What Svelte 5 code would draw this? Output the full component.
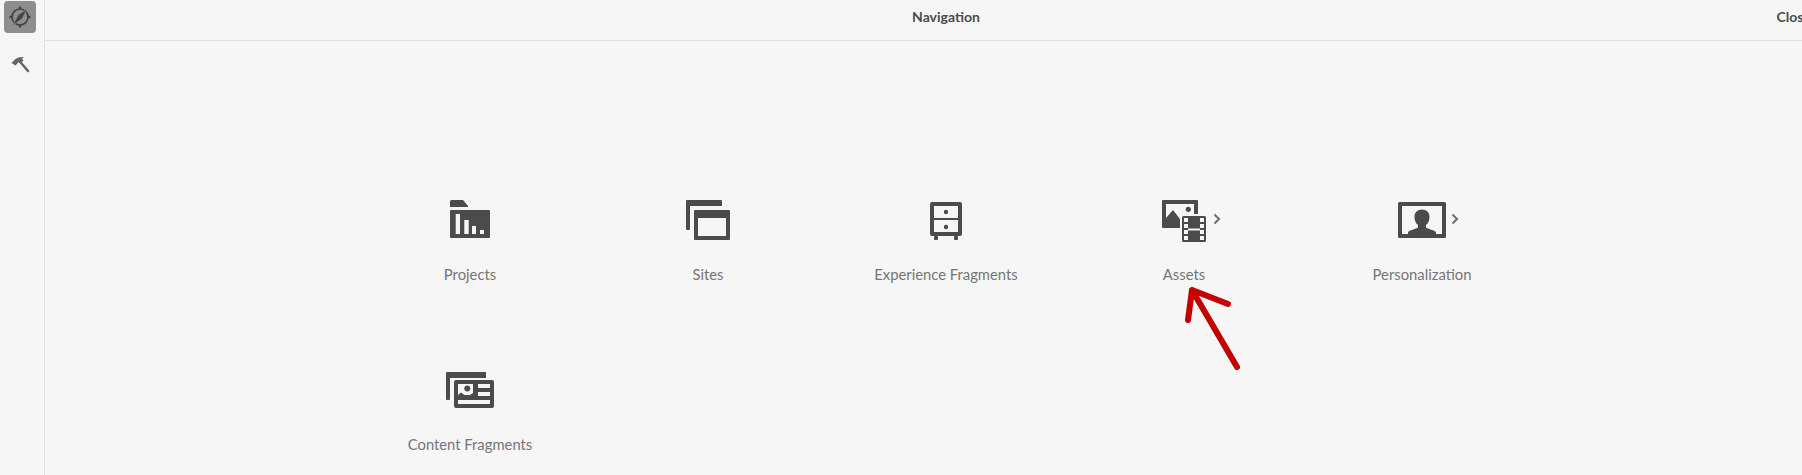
<script>
	// rounded rect as path data, holes are cut by fill-rule evenodd
	function box(x, y, w, h, r = 1) {
		return `M${x + r} ${y}H${x + w - r}Q${x + w} ${y} ${x + w} ${y + r}V${y + h - r}Q${x + w} ${y + h} ${x + w - r} ${y + h}H${x + r}Q${x} ${y + h} ${x} ${y + h - r}V${y + r}Q${x} ${y} ${x + r} ${y}Z`;
	}
	function dot(cx, cy, r) {
		return `M${cx - r} ${cy}A${r} ${r} 0 1 0 ${cx + r} ${cy}A${r} ${r} 0 1 0 ${cx - r} ${cy}Z`;
	}

	const items = [
		{
			label: 'Projects',
			d: [
				'M4 7V1.5Q4 0 5.5 0H17L22 6V7Z',
				box(4, 10, 40, 28),
				box(9.7, 14, 4.3, 20, 0),
				box(18.3, 20, 4.4, 14, 0),
				box(26, 26, 4, 8, 0),
				box(34, 30, 4, 4, 0)
			]
		},
		{
			label: 'Sites',
			d: [
				'M3 0H37Q38 0 38 1V6H6V29Q6 30 5 30H3Q2 30 2 29V1Q2 0 3 0Z',
				box(10, 10, 36, 30),
				box(14, 18, 28, 18, 0)
			]
		},
		{
			label: 'Experience Fragments',
			d: [
				box(8, 2, 32, 34, 2),
				box(12, 6, 24, 12, 0),
				box(12, 20, 24, 12, 0),
				dot(24, 12, 2.2),
				dot(24, 27, 2.2),
				box(12, 36, 4, 4, 1),
				box(32, 36, 4, 4, 1)
			]
		},
		{
			label: 'Assets',
			more: true,
			d: [
				'M3 0H37Q38 0 38 1V14H20V28H3Q2 28 2 27V1Q2 0 3 0Z',
				'M6 4H34V14H20V19L13 10L6 18Z',
				dot(28.3, 9.3, 2.6),
				box(22, 16, 24, 26, 1.5),
				box(24, 18, 4, 4, 0),
				box(24, 24, 4, 4, 0),
				box(24, 30, 4, 4, 0),
				box(24, 36, 4, 4, 0),
				box(40, 18, 4, 4, 0),
				box(40, 24, 4, 4, 0),
				box(40, 30, 4, 4, 0),
				box(40, 36, 4, 4, 0),
				box(28, 28.5, 12, 2, 0)
			]
		},
		{
			label: 'Personalization',
			more: true,
			d: [
				box(0, 2, 48, 36, 1.5),
				box(4, 6, 40, 28, 0),
				'M10 34V32.5C10 30.5 17 29.5 20 27.5V25C17.5 23 16.5 20.5 16.5 16.5C16.5 12.5 19.5 9.5 24 9.5C28.5 9.5 31.5 12.5 31.5 16.5C31.5 20.5 30.5 23 28 25V27.5C31 29.5 38 30.5 38 32.5V34Z'
			]
		},
		{
			label: 'Content Fragments',
			d: [
				'M1 2H40V8H4V29Q4 30 3 30H1Q0 30 0 29V3Q0 2 1 2Z',
				box(8, 10, 40, 28, 2),
				'M12 14H27V30H12Z',
				dot(21.3, 18.4, 3),
				'M12 30V25L15 22.5L18.5 25H24L27 23V30Z',
				box(32, 14, 12, 4, 0),
				box(32, 22, 12, 4, 0),
				box(12, 30, 32, 4, 0)
			]
		}
	];
</script>

<div class="shell">
	<nav class="rail">
		<button class="rail-btn active" aria-label="Navigation">
			<svg width="24" height="24" viewBox="0 0 24 24">
				<circle cx="12" cy="12" r="8" fill="none" stroke="#444" stroke-width="1.7" />
				<path d="M12 1.500V4.500M12 19.500V22.500M1.500 12H4.500M19.500 12H22.500" stroke="#444" stroke-width="2.400" />
				<path d="M19.500 3.500L14 14L4.500 20.500L10 10Z" fill="#444" stroke="#8e8e8e" stroke-width="0.800" />
			</svg>
		</button>
		<button class="rail-btn" aria-label="Tools">
			<svg width="24" height="24" viewBox="0 0 24 24">
				<path d="M3.500 11L7.500 7Q10.500 4.500 16 5L14 6.500L15.500 8.500L12.500 11.500L10.800 10L7.500 13.500Z" fill="#666" />
				<path d="M11 8.500L20 19" stroke="#666" stroke-width="2.600" stroke-linecap="round" />
			</svg>
		</button>
	</nav>

	<main class="main">
		<header class="top">
			<h1>Navigation</h1>
			<span class="close">Close</span>
		</header>

		<div class="grid">
			{#each items as item}
				<a class="cell" href="#{item.label}">
					<span class="icon">
						<svg width="48" height="44" viewBox="0 0 48 44">
							<path d={item.d.join('')} fill-rule="evenodd" />
						</svg>
						{#if item.more}
							<svg class="more" width="8" height="12" viewBox="0 0 8 12">
								<path d="M1.500 1.500L6 6L1.500 10.500" fill="none" stroke="#6e6e6e" stroke-width="2" />
							</svg>
						{/if}
					</span>
					<span class="label">{item.label}</span>
				</a>
			{/each}
		</div>
	</main>

	<svg class="arrow" width="70" height="100" viewBox="0 0 70 100">
		<path
			d="M12 5L57 82M8 35L12 5L48 19"
			fill="none"
			stroke="#c40000"
			stroke-width="6"
			stroke-linecap="round"
			stroke-linejoin="round"
		/>
	</svg>
</div>

<style>
	:global(html),
	:global(body) {
		margin: 0;
		overflow: hidden;
		background: #f6f6f6;
	}

	.shell {
		display: flex;
		height: 475px;
		position: relative;
		overflow: hidden;
		font-family: Lato, 'Liberation Sans', sans-serif;
	}

	.rail {
		flex: 0 0 45px;
		display: flex;
		flex-direction: column;
		align-items: flex-start;
		gap: 15px;
		padding: 1px 0 0 4px;
		box-sizing: border-box;
		border-right: 1px solid #e1e1e1;
	}

	.rail-btn {
		width: 32px;
		height: 32px;
		padding: 0;
		border: 0;
		border-radius: 4px;
		background: transparent;
		display: flex;
		align-items: center;
		justify-content: center;
	}

	.rail-btn.active {
		background: #8e8e8e;
	}

	.main {
		flex: 0 0 1802px;
	}

	.top {
		height: 41px;
		box-sizing: border-box;
		padding-bottom: 8px;
		border-bottom: 1px solid #e1e1e1;
		position: relative;
		display: flex;
		align-items: center;
		justify-content: center;
	}

	h1 {
		margin: 0;
		font-size: 14px;
		font-weight: 700;
		color: #4b4b4b;
	}

	.close {
		position: absolute;
		right: 36px;
		font-size: 14px;
		font-weight: 700;
		color: #4b4b4b;
	}

	.grid {
		width: 1190px;
		margin: 159px auto 0;
		display: grid;
		grid-template-columns: repeat(5, 238px);
		grid-auto-rows: 170px;
	}

	.cell {
		display: flex;
		flex-direction: column;
		align-items: center;
		text-decoration: none;
	}

	.icon {
		position: relative;
		display: block;
		height: 44px;
		fill: #4b4b4b;
	}

	.more {
		position: absolute;
		left: 100%;
		top: 13px;
		margin-left: 5px;
	}

	.label {
		margin-top: 20px;
		font-size: 14.8px;
		line-height: 20px;
		color: #757575;
	}

	.arrow {
		position: absolute;
		left: 1180px;
		top: 285px;
	}
</style>
